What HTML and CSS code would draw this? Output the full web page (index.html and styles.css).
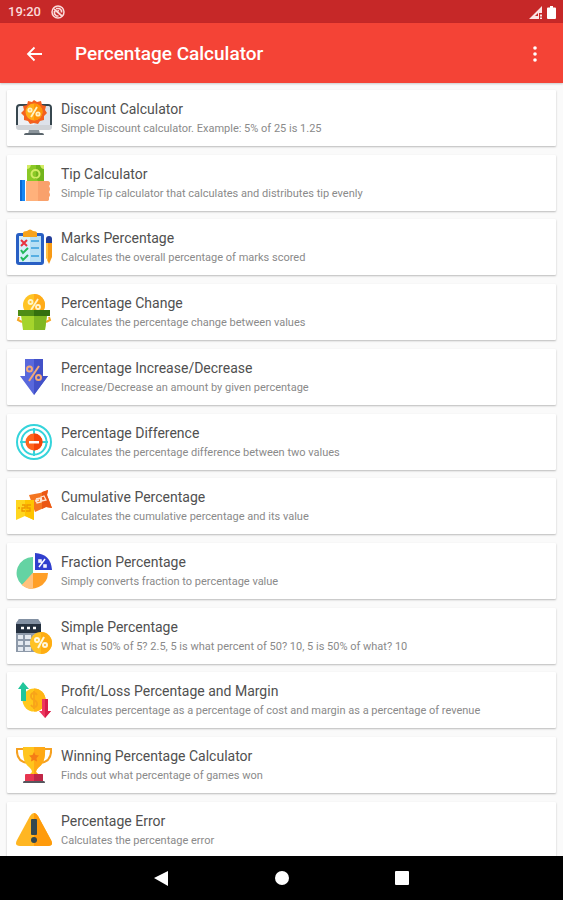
FILE: index.html
```html
<!DOCTYPE html>
<html lang="en">
<head>
    <meta charset="UTF-8">
    <meta name="viewport" content="width=device-width, initial-scale=1.0">
    <title>Percentage Calculator</title>
    <link rel="stylesheet" href="styles.css">
</head>
<body>
    <!-- Status bar -->
    <div class="status-bar">
        <span class="time">19:20</span>
        <svg class="status-icon" width="14" height="14" viewBox="0 0 14 14" fill="none" stroke="#fbdada">
            <circle cx="7" cy="7" r="6" stroke-width="1.500"/>
            <path d="M3 4l8 7M5 3.500h3.500l2 2v2M3.500 6v3l2 2h2M6 6.500l2-1" stroke-width="1.700"/>
        </svg>
        <svg class="signal" width="13" height="13" viewBox="0 0 13 13">
            <path d="M0 13L13 0v7h-3v6z" fill="#fbe4e4"/>
            <path d="M6 10l3-3v3z" fill="#c62828"/>
            <path d="M11 8.500h2v2h-2zM11 11.500h2V13h-2z" fill="#fbe4e4"/>
        </svg>
        <svg width="9" height="13" viewBox="0 0 9 13"><path d="M3 0h3v1.500h2q1 0 1 1V12q0 1-1 1H1q-1 0-1-1V2.500q0-1 1-1h2z" fill="#fff"/></svg>
    </div>

    <!-- Toolbar -->
    <header class="toolbar">
        <button class="icon-button" aria-label="Back">
            <svg width="16" height="16" viewBox="0 0 16 16" fill="none" stroke="#fff" stroke-width="1.800"><path d="M16 8H2M8.500 1.500L2 8l6.500 6.500"/></svg>
        </button>
        <h1>Percentage Calculator</h1>
        <button class="icon-button" aria-label="More options">
            <svg width="4" height="16" viewBox="0 0 4 16" fill="#fff"><circle cx="2" cy="2" r="1.800"/><circle cx="2" cy="8" r="1.800"/><circle cx="2" cy="14" r="1.800"/></svg>
        </button>
    </header>

    <main class="content">
        <ul class="list">
            <li><a class="card" href="#">
                <svg class="icon" viewBox="0 0 36 36">
                    <path d="M4 4h28q4 0 4 4v18H0V8q0-4 4-4z" fill="#37474f"/>
                    <path d="M4 6h28q2 0 2 2v18H2V8q0-2 2-2z" fill="#eef1f5"/>
                    <path d="M18 6h14q2 0 2 2v18H18z" fill="#dde2ea"/>
                    <path d="M0 25h36v2q0 3-3 3H3q-3 0-3-3z" fill="#d0d3d7"/>
                    <path d="M13 30h10l1 4H12z" fill="#8b949b"/>
                    <path d="M10 33h16q2 0 2 2H8q0-2 2-2z" fill="#59646b"/>
                    <path d="M18 0l3 2 4-1 1 4 4 1-1 4 2 3-3 3v4l-4 1-2 3-4-1-4 1-2-3-4-1v-4l-3-3 3-3-1-4 4-1 1-4 4 1z" fill="#f4601e"/>
                    <circle cx="18" cy="12" r="8.500" fill="#ffad1a"/>
                    <path d="M18 3.500a8.500 8.500 0 0 1 0 17z" fill="#ff9408"/>
                    <g fill="none" stroke="#fff3c4" stroke-width="1.800"><path d="M21 7l-6 10"/><circle cx="14" cy="10" r="1.700"/><circle cx="22" cy="14" r="1.700"/></g>
                </svg>
                <span class="text"><span class="title">Discount Calculator</span><span class="subtitle">Simple Discount calculator. Example: 5% of 25 is 1.25</span></span>
            </a></li>
            <li><a class="card" href="#">
                <svg class="icon" viewBox="0 0 36 36">
                    <path d="M11 0h17v17H11z" fill="#8bc926"/>
                    <path d="M20 0h8v17h-8z" fill="#72b51c"/>
                    <path d="M11 0h4q-1 4-4 4zM28 0h-4q1 4 4 4z" fill="#d3ec65"/>
                    <circle cx="19.500" cy="9" r="4" fill="none" stroke="#d3ec65" stroke-width="2"/>
                    <path d="M13 16l7-3 2 3z" fill="#8bc926"/>
                    <path d="M4 15h5v21H4z" fill="#1688f5"/>
                    <path d="M4 15h2v21H4z" fill="#0868d5"/>
                    <path d="M10 16h21q3 0 3 3l-1 2 1 3-1 3 1 3-1 2v2q0 2-3 2H10z" fill="#ffb17b"/>
                    <path d="M22 16h9q3 0 3 3l-1 2 1 3-1 3 1 3-1 2v2q0 2-3 2h-8z" fill="#f9a16c"/>
                </svg>
                <span class="text"><span class="title">Tip Calculator</span><span class="subtitle">Simple Tip calculator that calculates and distributes tip evenly</span></span>
            </a></li>
            <li><a class="card" href="#">
                <svg class="icon" viewBox="0 0 36 36">
                    <rect y="4" width="28" height="32" rx="3" fill="#285fc4"/>
                    <path d="M3 7h22v26H3z" fill="#d7f0fb"/>
                    <path d="M14 7h11v26H14z" fill="#b8dff4"/>
                    <path d="M7 8V4q0-2 4-2 3-3 6 0 4 0 4 2v4z" fill="#f7a21b"/>
                    <path d="M15 12h8M15 19h8M15 27h8" stroke="#56aee2" stroke-width="2"/>
                    <path d="M5 11l6 6m0-6l-6 6" stroke="#e9333f" stroke-width="2"/>
                    <path d="M5 21l2 3 5-5M5 28l2 3 5-5" fill="none" stroke="#24b95b" stroke-width="2"/>
                    <path d="M30 14h6v14l-3 7-3-7z" fill="#f79a16"/>
                    <path d="M30 14h2v19l-2-5z" fill="#ffc344"/>
                    <path d="M30 10q0-3 3-3t3 3v4h-6z" fill="#233d99"/>
                </svg>
                <span class="text"><span class="title">Marks Percentage</span><span class="subtitle">Calculates the overall percentage of marks scored</span></span>
            </a></li>
            <li><a class="card" href="#">
                <svg class="icon" viewBox="0 0 36 36">
                    <circle cx="18" cy="11" r="11" fill="#ffc323"/>
                    <path d="M18 0a11 11 0 0 1 0 22z" fill="#ffab19"/>
                    <g fill="none" stroke="#fff5c9" stroke-width="1.800"><path d="M22 5l-7 11"/><circle cx="14.500" cy="8" r="2"/><circle cx="22" cy="13" r="2"/></g>
                    <path d="M3 23l-1 3 4 2M33 23l1 3-4 2" fill="none" stroke="#f5a623" stroke-width="2"/>
                    <path d="M5 21h26l-2 15H7z" fill="#a5d42c"/>
                    <path d="M18 21h13l-2 15H18z" fill="#80b822"/>
                    <path d="M2 16h32v6H2z" fill="#4d8c16"/>
                    <path d="M18 16h16v6H18z" fill="#34700f"/>
                </svg>
                <span class="text"><span class="title">Percentage Change</span><span class="subtitle">Calculates the percentage change between values</span></span>
            </a></li>
            <li><a class="card" href="#">
                <svg class="icon" viewBox="0 0 36 36">
                    <path d="M9 0h18v17h5L18 36 4 17h5z" fill="#5968dc"/>
                    <path d="M18 0h9v17h5L18 36z" fill="#4251c8"/>
                    <g fill="none" stroke="#f3a978" stroke-width="2"><path d="M23 7L13 22"/><circle cx="13.500" cy="10" r="2.500"/><circle cx="22.500" cy="18.500" r="2.500"/></g>
                </svg>
                <span class="text"><span class="title">Percentage Increase/Decrease</span><span class="subtitle">Increase/Decrease an amount by given percentage</span></span>
            </a></li>
            <li><a class="card" href="#">
                <svg class="icon" viewBox="0 0 36 36">
                    <g fill="none" stroke="#35d4db" stroke-width="2"><circle cx="18" cy="18" r="17"/><circle cx="18" cy="18" r="12.500"/><path d="M18 4v8M18 24v8M4 18h8M24 18h8"/></g>
                    <circle cx="18" cy="18" r="8.500" fill="#ff641c"/>
                    <path d="M18 9.500a8.500 8.500 0 0 1 0 17z" fill="#f54408"/>
                    <path d="M13 17h10v2.500H13z" fill="#fff"/>
                </svg>
                <span class="text"><span class="title">Percentage Difference</span><span class="subtitle">Calculates the percentage difference between two values</span></span>
            </a></li>
            <li><a class="card" href="#">
                <svg class="icon" viewBox="0 0 36 36">
                    <path d="M13 7l11-2 8-3-1 5 5 13-6-1-11 5z" fill="#f47520"/>
                    <path d="M26 4l6-2-1 5 5 13-6-1-4 2z" fill="#eb5714"/>
                    <path d="M0 12h18v20l-9-4-9 4z" fill="#ffd61f"/>
                    <path d="M9 12h9v20l-9-4z" fill="#ffc400"/>
                    <path d="M2 20h2M6 17h3v3H6v3h3M15 17h-4v3h3v3h-4" fill="none" stroke="#ef9700" stroke-width="1.400"/>
                    <path d="M20 11l4-1 1 4-4 1-1-4m-1 2l4-1M25 9l3-1 2 4-4 1z" fill="none" stroke="#ffe4d0" stroke-width="1.300"/>
                </svg>
                <span class="text"><span class="title">Cumulative Percentage</span><span class="subtitle">Calculates the cumulative percentage and its value</span></span>
            </a></li>
            <li><a class="card" href="#">
                <svg class="icon" viewBox="0 0 36 36">
                    <path d="M17 4v16L6 32A16 16 0 0 1 17 4z" fill="#64d3a3"/>
                    <path d="M17 20h15A16 16 0 0 1 6 32z" fill="#ff9f27"/>
                    <path d="M17 20v16a16 16 0 0 1-11-4z" fill="#ffc17c"/>
                    <path d="M19 0q16 1 17 17H19z" fill="#303fce"/>
                    <path d="M29 6l-6 8M23 7h2v2h-2zM28 12h2v2h-2z" fill="none" stroke="#fff" stroke-width="1.500"/>
                </svg>
                <span class="text"><span class="title">Fraction Percentage</span><span class="subtitle">Simply converts fraction to percentage value</span></span>
            </a></li>
            <li><a class="card" href="#">
                <svg class="icon" viewBox="0 0 36 36">
                    <path d="M3 1h19l3 4v29H0V5z" fill="#8d99a9"/>
                    <path d="M0 6h25v9H0z" fill="#253140"/>
                    <path d="M3 1h19l3 5H0z" fill="#8391a3"/>
                    <path d="M5 10h3M11 10h3M17 10h3" stroke="#fff" stroke-width="2.500"/>
                    <path d="M2 17h5v4H2zM9 17h6v4H9zM17 17h6v4h-6zM2 23h5v4H2zM9 23h6v4H9zM2 29h5v4H2zM9 29h6v4H9z" fill="#e4e9f0"/>
                    <circle cx="25" cy="25" r="11" fill="#ffc224"/>
                    <path d="M25 14a11 11 0 0 1 0 22z" fill="#ffad13"/>
                    <g fill="none" stroke="#fff8df" stroke-width="2"><path d="M28 19l-6 11"/><circle cx="21" cy="22" r="2"/><circle cx="29" cy="27" r="2"/></g>
                </svg>
                <span class="text"><span class="title">Simple Percentage</span><span class="subtitle">What is 50% of 5? 2.5, 5 is what percent of 50? 10, 5 is 50% of what? 10</span></span>
            </a></li>
            <li><a class="card" href="#">
                <svg class="icon" viewBox="0 0 36 36">
                    <circle cx="18" cy="18" r="11.500" fill="#ffc81c"/>
                    <path d="M18 6.500a11.500 11.500 0 0 1 0 23z" fill="#ffb515"/>
                    <path d="M21 13q-1-2-3-2-3 0-3 3t3 4 3 4-3 3q-2 0-3-2M18 9v18" fill="none" stroke="#f8a41a" stroke-width="1.800"/>
                    <path d="M7 0l6 7h-3v12H5V7H2z" fill="#21c69b"/>
                    <path d="M26 17h6v12h3l-6 7-6-7h3z" fill="#ed365f"/>
                    <path d="M29 17h3v12h3l-6 7z" fill="#d81e49"/>
                </svg>
                <span class="text"><span class="title">Profit/Loss Percentage and Margin</span><span class="subtitle">Calculates percentage as a percentage of cost and margin as a percentage of revenue</span></span>
            </a></li>
            <li><a class="card" href="#">
                <svg class="icon" viewBox="0 0 36 36">
                    <path d="M8 2H1q-1 13 11 14M28 2h7q1 13-11 14" fill="none" stroke="#f5a020" stroke-width="2"/>
                    <path d="M7 0h22q1 16-7 21-2 2-2 4l3 3H13l3-3q0-2-2-4Q6 16 7 0z" fill="#ffc51d"/>
                    <path d="M18 0h11q1 16-7 21-2 2-2 4l3 3h-5z" fill="#ffa915"/>
                    <path d="M18 5l1.500 3 3.500.5-2.500 2.500.5 3.500-3-1.500-3 1.500.5-3.500L13 8.500l3.500-.5z" fill="#f57c16"/>
                    <path d="M10 27h16q1 0 1 1v7H9v-7q0-1 1-1z" fill="#e73650"/>
                    <path d="M18 27h8q1 0 1 1v7h-9z" fill="#bf2747"/>
                    <path d="M8 34h20q1 0 1 2H7q0-2 1-2z" fill="#56575e"/>
                </svg>
                <span class="text"><span class="title">Winning Percentage Calculator</span><span class="subtitle">Finds out what percentage of games won</span></span>
            </a></li>
            <li><a class="card" href="#">
                <svg class="icon" viewBox="0 0 36 36">
                    <path d="M14 4q4-6 8 0l13 24q3 6-3 6H4q-6 0-3-6z" fill="#ffb622"/>
                    <path d="M18 1q2 0 4 3l13 24q3 6-3 6H18z" fill="#ff9b0b"/>
                    <rect x="15" y="7" width="6" height="16" rx="1" fill="#344850"/>
                    <circle cx="18" cy="28" r="3" fill="#344850"/>
                </svg>
                <span class="text"><span class="title">Percentage Error</span><span class="subtitle">Calculates the percentage error</span></span>
            </a></li>
        </ul>
    </main>

    <!-- System navigation -->
    <nav class="nav-bar">
        <button class="icon-button" aria-label="Back"><svg width="16" height="16" viewBox="0 0 16 16"><path d="M0 8l14-7v15z" fill="#fff"/></svg></button>
        <button class="icon-button" aria-label="Home"><svg width="16" height="16" viewBox="0 0 16 16"><circle cx="8" cy="8" r="7" fill="#fff"/></svg></button>
        <button class="icon-button" aria-label="Recent apps"><svg width="16" height="16" viewBox="0 0 16 16"><path d="M2 1h12q1 0 1 1v12q0 1-1 1H2q-1 0-1-1V2q0-1 1-1z" fill="#fff"/></svg></button>
    </nav>
</body>
</html>
```
FILE: styles.css
```css
/* Reset */
* {
    margin: 0;
    padding: 0;
    box-sizing: border-box;
}

body {
    display: flex;
    flex-direction: column;
    height: 100vh;
    font-family: Roboto, "Liberation Sans", sans-serif;
    background-color: #fafafa;
    color: #333;
}

svg {
    display: block;
    flex-shrink: 0;
}

/* Status bar */
.status-bar {
    display: flex;
    align-items: center;
    flex-shrink: 0;
    height: 23px;
    padding: 1px 7px 0 8px;
    background-color: #c62828;
}

.time {
    color: #fbdada;
    font-size: 13px;
    font-weight: 500;
    line-height: 16px;
}

.status-icon {
    margin-left: 10px;
}

.signal {
    margin-left: auto;
    margin-right: 5px;
}

/* Toolbar */
.toolbar {
    display: flex;
    align-items: center;
    flex-shrink: 0;
    height: 60px;
    padding: 1px 16px 0 22px;
    background-color: #f44336;
    box-shadow: 0 1px 2px rgba(0, 0, 0, 0.2);
    z-index: 1;
}

.toolbar h1 {
    flex: 1;
    margin-left: 29px;
    color: #fff;
    font-size: 19px;
    font-weight: 500;
    line-height: 24px;
}

.icon-button {
    display: flex;
    align-items: center;
    justify-content: center;
    width: 24px;
    height: 24px;
    border: none;
    background: none;
    cursor: pointer;
}

/* Calculator list */
.content {
    flex: 1;
    min-height: 0;
    overflow-y: auto;
    scrollbar-width: none;
}

.list {
    display: flex;
    flex-direction: column;
    justify-content: space-between;
    gap: 8px;
    min-height: calc(100% + 2px);
    padding: 7px 7px 0;
    list-style: none;
}

.card {
    display: flex;
    align-items: center;
    gap: 9px;
    min-height: 56px;
    padding: 0 9px;
    background-color: #fff;
    border-radius: 1px;
    box-shadow: 0 1px 2px rgba(0, 0, 0, 0.26);
    color: inherit;
    text-decoration: none;
}

.card:hover {
    background-color: #f5f5f5;
}

.icon {
    width: 36px;
    height: 36px;
}

.text {
    padding-top: 2px;
}

.title,
.subtitle {
    display: block;
    line-height: 20px;
}

.title {
    font-size: 14px;
    color: #505050;
}

.subtitle {
    font-size: 11px;
    color: #8a8a8a;
}

/* System navigation */
.nav-bar {
    display: flex;
    align-items: center;
    justify-content: center;
    gap: 96px;
    flex-shrink: 0;
    height: 44px;
    background-color: #000;
}
```
